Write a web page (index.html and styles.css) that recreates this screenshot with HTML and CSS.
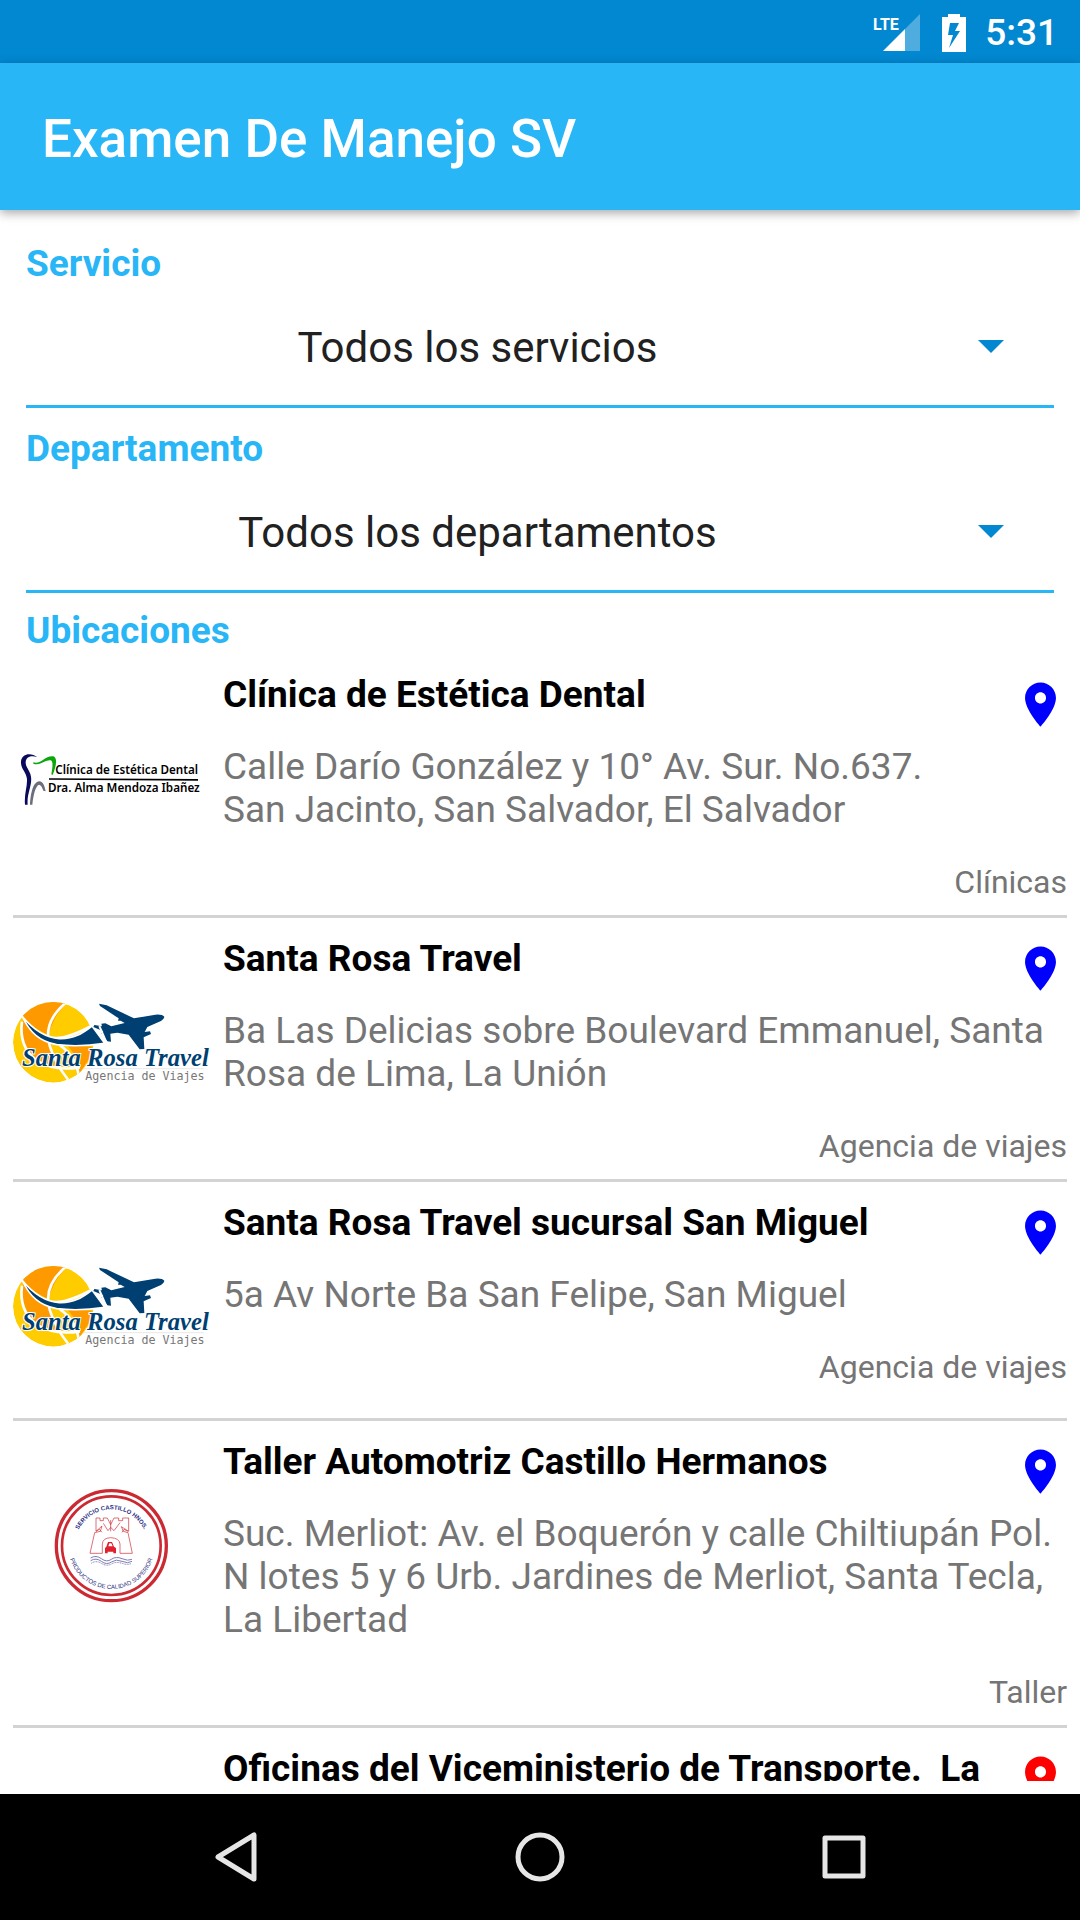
FILE: index.html
```html
<!DOCTYPE html>
<html lang="es">
  <head>
    <meta charset="UTF-8" />
    <meta name="viewport" content="width=device-width, initial-scale=1.0" />
    <title>Examen De Manejo SV</title>
    <link rel="stylesheet" href="styles.css">
  </head>
  <body>
    <!-- shared drawings -->
    <svg class="defs" aria-hidden="true">
      <clipPath id="globe"><circle cx="160" cy="187" r="121" /></clipPath>
      <symbol id="pin" viewBox="0 0 24 24">
        <path fill="currentColor" d="M12 2C8.13 2 5 5.13 5 9c0 5.25 7 13 7 13s7-7.75 7-13c0-3.87-3.13-7-7-7zm0 9.5c-1.38 0-2.5-1.12-2.5-2.5s1.12-2.5 2.5-2.5 2.5 1.12 2.5 2.5-1.12 2.5-2.5 2.5z" />
      </symbol>
      <g id="santa-rosa">
        <g clip-path="url(#globe)">
          <circle cx="160" cy="187" r="121" fill="#ffcc00" />
          <path fill="#ff9900" d="M60 110L110 50L205 66Q160 105 146 165Q105 150 70 112Z" />
          <path fill="#ff9900" d="M72 118Q100 170 152 190Q156 222 185 270Q140 265 100 228Q62 190 64 130Z" />
          <path fill="#ff9900" d="M200 194L275 200L268 235L235 285Q240 235 200 194Z" />
          <path class="line" d="M205 62Q125 125 150 200Q165 250 205 300" />
          <path class="line" d="M66 125Q56 200 108 240Q160 275 240 262" />
          <path class="line" d="M145 170Q185 188 285 132" />
          <path class="line" d="M180 196Q232 230 238 300" />
        </g>
        <path fill="#003f72" stroke="#fff" stroke-width="5" d="M66 108C92 140 126 172 178 176C220 178 248 160 276 138L314 190C270 197 222 200 170 194C118 184 88 156 66 108Z" />
        <path fill="#003f72" d="M297 71L320 76L402 115L466 104Q486 102 493 110Q492 119 476 126L442 141L434 156L450 154L453 162L431 172L433 207L419 208L386 164L352 158L331 161L333 185L322 184L304 160L310 154L280 141L283 135L306 139L304 131L316 130L334 139L374 129L362 122L354 122L356 115L300 78Z" />
        <path stroke="#fff" stroke-width="6" d="M298 138L322 194" />
        <path stroke="#ddd" stroke-width="2" d="M250 266H612" />
      </g>
    </svg>

    <header class="status-bar">
      <svg class="signal" viewBox="0 0 48 40" aria-hidden="true">
        <path fill="#fff" fill-opacity=".3" d="M33 16L48 1V38H33Z" />
        <path fill="#fff" d="M11 38L33 16V38Z" />
        <text class="lte" x="1" y="17">LTE</text>
      </svg>
      <svg class="battery" viewBox="0 0 24 38" aria-hidden="true">
        <path fill="#fff" fill-rule="evenodd" d="M6 0H18V3H24V38H0V3H6ZM8 9L6 21H11L7 34L18 17H13L17 9Z" />
      </svg>
      <time class="clock">5:31</time>
    </header>
    <div class="app-bar">
      <h1 class="app-title">Examen De Manejo SV</h1>
    </div>

    <main class="content">
      <form class="filters">
        <div class="field">
          <label class="label" for="servicio">Servicio</label>
          <div class="select-box">
            <select class="select" id="servicio">
              <option>Todos los servicios</option>
            </select>
            <svg class="arrow" viewBox="0 0 26 13" aria-hidden="true"><path fill="#0288d1" d="M0 0H26L13 13Z" /></svg>
          </div>
        </div>
        <div class="field">
          <label class="label" for="departamento">Departamento</label>
          <div class="select-box">
            <select class="select" id="departamento">
              <option>Todos los departamentos</option>
            </select>
            <svg class="arrow" viewBox="0 0 26 13" aria-hidden="true"><path fill="#0288d1" d="M0 0H26L13 13Z" /></svg>
          </div>
        </div>
      </form>

      <h2 class="label heading">Ubicaciones</h2>
      <ul class="list">
        <li class="item">
          <svg class="logo" viewBox="39 -150 591 591" aria-hidden="true">
            <path fill="#0a0a5c" d="M112 82C96 68 66 68 63 94C61 116 80 126 81 148C82 170 72 194 75 224H83C80 190 97 168 93 140C90 120 76 112 77 96C79 78 98 76 112 82Z" />
            <path fill="#0aa60a" d="M100 97C124 104 134 76 160 79C174 84 168 110 158 135L154 133C158 110 160 94 152 91C136 88 122 108 100 101Z" />
            <path fill="#6b6e7b" d="M90 224C92 192 98 156 118 154C130 154 134 170 137 184L130 182C126 170 122 164 117 164C106 168 100 196 97 224Z" />
            <path fill="#000" d="M147 145L594 147V152L147 149Z" />
            <text class="clinic-name" x="166" y="132">Clínica de Estética Dental</text>
            <text class="clinic-name" x="144" y="186">Dra. Alma Mendoza Ibañez</text>
          </svg>
          <div class="info">
            <div class="top">
              <h3 class="name">Clínica de Estética Dental</h3>
              <svg class="pin" aria-hidden="true"><use href="#pin" /></svg>
            </div>
            <p class="address">Calle Darío González y 10° Av. Sur. No.637.<br>San Jacinto, San Salvador, El Salvador</p>
            <p class="kind">Clínicas</p>
          </div>
        </li>
        <li class="item">
          <svg class="logo" viewBox="39 -108 591 591" aria-hidden="true">
            <use href="#santa-rosa" />
            <text class="santa-name" x="66" y="257">Santa Rosa Travel</text>
            <text class="santa-tag" x="256" y="299">Agencia de Viajes</text>
          </svg>
          <div class="info">
            <div class="top">
              <h3 class="name">Santa Rosa Travel</h3>
              <svg class="pin" aria-hidden="true"><use href="#pin" /></svg>
            </div>
            <p class="address">Ba Las Delicias sobre Boulevard Emmanuel, Santa Rosa de Lima, La Unión</p>
            <p class="kind">Agencia de viajes</p>
          </div>
        </li>
        <li class="item">
          <svg class="logo" viewBox="39 -108 591 591" aria-hidden="true">
            <use href="#santa-rosa" />
            <text class="santa-name" x="66" y="257">Santa Rosa Travel</text>
            <text class="santa-tag" x="256" y="299">Agencia de Viajes</text>
          </svg>
          <div class="info">
            <div class="top">
              <h3 class="name">Santa Rosa Travel sucursal San Miguel</h3>
              <svg class="pin" aria-hidden="true"><use href="#pin" /></svg>
            </div>
            <p class="address">5a Av Norte Ba San Felipe, San Miguel</p>
            <p class="kind">Agencia de viajes</p>
          </div>
        </li>
        <li class="item">
          <svg class="logo" viewBox="-81 -69 591 591" aria-hidden="true">
            <g fill="none" stroke="#cc2a33">
              <circle cx="214" cy="227" r="165" stroke-width="10" />
              <circle cx="214" cy="227" r="148" stroke-width="8" />
              <g stroke-width="2">
                <path d="M150 250L164 188L181 184L186 168L168 184V144H180V152H190V144H202L212 164L222 144H236V152H248V144H266V184L244 170L250 184L264 188L277 250H240V222Q238 204 212 203Q188 204 187 222V250Z" />
                <path d="M212 150V184M190 160L204 182L212 172L222 182L240 158M168 184L178 178L186 187M264 184L252 178L246 187" />
              </g>
            </g>
            <path fill="#e0202c" d="M195 250V234L199 230L204 216H216L222 230L228 234V250H220V245H203V250ZM205 229H218L214 220H208Z" fill-rule="evenodd" />
            <g fill="none" stroke="#7d7db5" stroke-width="3">
              <path d="M152 264Q168 254 184 266T214 268T246 266T276 268" />
              <path d="M152 272Q168 262 184 274T214 276T246 274T276 274" />
              <path d="M154 280Q168 270 184 280T214 282T246 280T274 280" stroke-dasharray="3 2" />
            </g>
            <path id="arc-top" fill="none" d="M105 227A109 109 0 0 1 323 227" />
            <path id="arc-bottom" fill="none" d="M84 227A130 130 0 0 0 344 227" />
            <text class="seal seal-top"><textPath href="#arc-top" startOffset="50%">SERVICIO CASTILLO HNOS.</textPath></text>
            <text class="seal"><textPath href="#arc-bottom" startOffset="50%">PRODUCTOS DE CALIDAD SUPERIOR</textPath></text>
          </svg>
          <div class="info">
            <div class="top">
              <h3 class="name">Taller Automotriz Castillo Hermanos</h3>
              <svg class="pin" aria-hidden="true"><use href="#pin" /></svg>
            </div>
            <p class="address">Suc. Merliot: Av. el Boquerón y calle Chiltiupán Pol. N lotes 5 y 6 Urb. Jardines de Merliot, Santa Tecla, La Libertad</p>
            <p class="kind">Taller</p>
          </div>
        </li>
        <li class="item">
          <div class="logo"></div>
          <div class="info">
            <div class="top">
              <h3 class="name">Oficinas del Viceministerio de Transporte.&nbsp; La</h3>
              <svg class="pin red" aria-hidden="true"><use href="#pin" /></svg>
            </div>
          </div>
        </li>
      </ul>
    </main>

    <nav class="nav-bar">
      <button class="nav-button" type="button" aria-label="Atrás">
        <svg class="nav-icon" viewBox="0 0 54 54"><path d="M45 5V49L9 27Z" /></svg>
      </button>
      <button class="nav-button" type="button" aria-label="Inicio">
        <svg class="nav-icon" viewBox="0 0 54 54"><circle cx="27" cy="27" r="22" /></svg>
      </button>
      <button class="nav-button" type="button" aria-label="Recientes">
        <svg class="nav-icon" viewBox="0 0 54 54"><rect x="8" y="8" width="38" height="38" /></svg>
      </button>
    </nav>
  </body>
</html>
```
FILE: styles.css
```css
* {
  box-sizing: border-box;
}
body {
  height: 100vh;
  margin: 0;
  display: flex;
  flex-direction: column;
  background: #fff;
  font-family: Roboto, "Noto Sans", sans-serif;
  font-size: 37px;
  line-height: 43px;
}
h1,
h2,
h3,
p,
ul {
  margin: 0;
  padding: 0;
}
.defs {
  position: absolute;
  width: 0;
  height: 0;
}

/* top bars */
.status-bar {
  flex: none;
  height: 63px;
  padding: 2px 22px 0;
  display: flex;
  align-items: center;
  justify-content: flex-end;
  background: #0288d1;
  color: #fff;
}
.signal {
  width: 48px;
  height: 40px;
  margin-right: 22px;
}
.lte {
  font-family: "Liberation Sans Narrow", Roboto, sans-serif;
  font-size: 16px;
  font-weight: 700;
  fill: #fff;
}
.battery {
  width: 24px;
  height: 38px;
  margin-right: 19px;
}
.clock {
  font-weight: 500;
}
.app-bar {
  flex: none;
  height: 147px;
  padding: 4px 42px 0;
  display: flex;
  align-items: center;
  background: #29b6f6;
  box-shadow: 0 3px 10px rgba(0, 0, 0, 0.35);
  z-index: 1;
}
.app-title {
  color: #fff;
  font-size: 53px;
  line-height: 62px;
  font-weight: 500;
}

/* filters */
.content {
  flex: 1;
  min-height: 0;
  margin-bottom: 13px;
  padding-top: 32px;
  overflow: hidden;
}
.filters {
  padding: 0 26px;
  display: flex;
  flex-direction: column;
  gap: 19px;
}
.label {
  display: block;
  color: #29b6f6;
  font-size: 37px;
  font-weight: 700;
}
.heading {
  margin: 16px 26px 2px;
}
.select-box {
  position: relative;
  border-bottom: 3px solid #29b6f6;
}
.select {
  display: block;
  width: 100%;
  height: 120px;
  padding: 5px 125px 0 0;
  appearance: none;
  border: 0;
  background: none;
  color: #212121;
  font-family: inherit;
  font-size: 42px;
  text-align: center;
}
.arrow {
  position: absolute;
  right: 50px;
  top: 55px;
  width: 26px;
  height: 13px;
  pointer-events: none;
}

/* locations */
.list {
  padding: 0 13px;
  list-style: none;
}
.item {
  display: flex;
  gap: 13px;
  border-bottom: 3px solid #d3d3d3;
}
.logo {
  flex: none;
  width: 197px;
  height: 197px;
  margin: 26px 0 13px;
}
.info {
  flex: 1;
  padding: 19px 0 14px;
}
.top {
  display: flex;
  justify-content: space-between;
  height: 72px;
}
.name {
  color: #000;
  font-size: 37px;
  font-weight: 700;
}
.pin {
  flex: none;
  width: 53px;
  height: 53px;
  margin-top: 5px;
  color: #00f;
}
.red {
  color: #f00;
}
.address {
  color: #757575;
}
.kind {
  margin-top: 33px;
  color: #757575;
  font-size: 32px;
  line-height: 37px;
  text-align: right;
}

/* lettering inside the logos */
.line {
  fill: none;
  stroke: #fff;
  stroke-width: 8px;
}
.clinic-name {
  font-family: "Noto Sans", sans-serif;
  font-size: 35px;
  font-weight: 600;
}
.santa-name {
  font-family: "Liberation Serif", serif;
  font-size: 74px;
  font-style: italic;
  font-weight: 700;
  fill: #003f72;
  stroke: #fff;
  stroke-width: 6px;
  paint-order: stroke;
}
.santa-tag {
  font-family: "DejaVu Sans Mono", monospace;
  font-size: 35px;
  fill: #777;
}
.seal {
  font-family: "Liberation Sans", sans-serif;
  font-size: 18px;
  fill: #2b2b80;
  text-anchor: middle;
}
.seal-top {
  font-weight: 700;
}

/* system buttons */
.nav-bar {
  flex: none;
  height: 126px;
  padding: 0 84px;
  display: grid;
  grid-template-columns: repeat(3, 1fr);
  background: #000;
}
.nav-button {
  display: flex;
  align-items: center;
  justify-content: center;
  padding: 0;
  border: 0;
  background: none;
}
.nav-icon {
  width: 54px;
  height: 54px;
  fill: none;
  stroke: #e6e6e6;
  stroke-width: 5px;
  stroke-linejoin: round;
}
```
